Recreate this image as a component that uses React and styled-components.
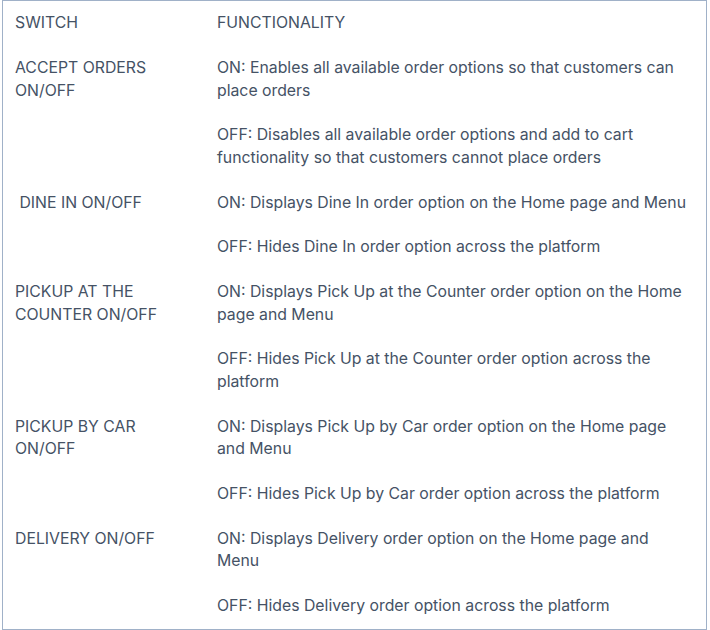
import React from 'react'
import styled, { createGlobalStyle } from 'styled-components'

const Global = createGlobalStyle`
	body {
		margin: 0;
		background: #ffffff;
		font-family: Inter, "Noto Sans", sans-serif;
	}
`

const Frame = styled.div`
	margin-left: 2px;
	width: 705px;
	border: 1px solid #a0b1c8;
	box-sizing: border-box;
`

const Table = styled.table`
	width: 100%;
	border-collapse: collapse;
	table-layout: fixed;
	color: #455265;
	font-size: 15.8px;
	line-height: 22.5px;
`

const SwitchCol = styled.col`
	width: 202px;
`

const Cell = styled.td`
	vertical-align: top;
	padding: 11.25px 14px 11.25px 12px;
	text-align: left;
	font-weight: 400;
`

const Head = styled(Cell).attrs({ as: 'th' })``

const Para = styled.p`
	margin: 0;
	& + & {
		margin-top: 22px;
	}
`

const rows = [
	{
		name: 'ACCEPT ORDERS ON/OFF',
		on: 'ON: Enables all available order options so that customers can place orders',
		off: 'OFF: Disables all available order options and add to cart functionality so that customers cannot place orders'
	},
	{
		name: '\u00a0DINE IN ON/OFF',
		on: 'ON: Displays Dine In order option on the Home page and Menu',
		off: 'OFF: Hides Dine In order option across the platform'
	},
	{
		name: 'PICKUP AT THE COUNTER ON/OFF',
		on: 'ON: Displays Pick Up at the Counter order option on the Home page and Menu',
		off: 'OFF: Hides Pick Up at the Counter order option across the platform'
	},
	{
		name: 'PICKUP BY CAR ON/OFF',
		on: 'ON: Displays Pick Up by Car order option on the Home page and Menu',
		off: 'OFF: Hides Pick Up by Car order option across the platform'
	},
	{
		name: 'DELIVERY ON/OFF',
		on: 'ON: Displays Delivery order option on the Home page and Menu',
		off: 'OFF: Hides Delivery order option across the platform'
	}
]

export default function App() {
	return (
		<>
			<Global />
			<Frame>
				<Table>
					<colgroup>
						<SwitchCol />
						<col />
					</colgroup>
					<thead>
						<tr>
							<Head>SWITCH</Head>
							<Head>FUNCTIONALITY</Head>
						</tr>
					</thead>
					<tbody>
						{rows.map(row => (
							<tr key={row.name}>
								<Cell>{row.name}</Cell>
								<Cell>
									<Para>{row.on}</Para>
									<Para>{row.off}</Para>
								</Cell>
							</tr>
						))}
					</tbody>
				</Table>
			</Frame>
		</>
	)
}
